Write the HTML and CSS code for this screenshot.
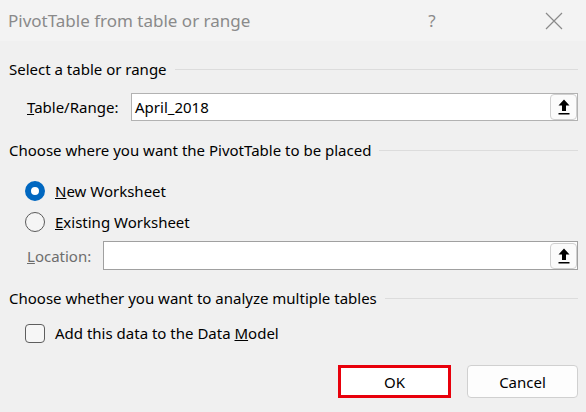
FILE: index.html
```html
<!DOCTYPE html>
<html lang="en">
<head>
<meta charset="utf-8">
<title>PivotTable from table or range</title>
<link rel="stylesheet" href="styles.css">
</head>
<body>
<div class="dialog">
  <div class="titlebar">
    <span class="title">PivotTable from table or range</span>
    <span class="help">?</span>
    <span class="close">
      <svg width="18" height="18" viewBox="0 0 18 18"><path d="M1 1 L17 17 M17 1 L1 17" stroke="#8a8a8a" stroke-width="1.2" fill="none"/></svg>
    </span>
  </div>
  <div class="content">
    <div class="group-head g1"><span>Select a table or range</span><span class="rule"></span></div>
    <div class="field-row r-table">
      <span class="label"><u>T</u>able/Range:</span>
      <div class="input">
        <span class="value">April_2018</span>
        <span class="pick">
          <svg width="12" height="16" viewBox="0 0 12 16"><path d="M6 0.5 L11.5 6.5 L8 6.5 L8 12 L4 12 L4 6.5 L0.5 6.5 Z" fill="#000"/><rect x="0.5" y="14" width="11" height="1.5" fill="#000"/></svg>
        </span>
      </div>
    </div>
    <div class="group-head g2"><span>Choose where you want the PivotTable to be placed</span><span class="rule"></span></div>
    <div class="option o1"><span class="radio checked"></span><span class="opt-label"><u>N</u>ew Worksheet</span></div>
    <div class="option o2"><span class="radio"></span><span class="opt-label"><u>E</u>xisting Worksheet</span></div>
    <div class="field-row r-loc">
      <span class="label muted"><u>L</u>ocation:</span>
      <div class="input loc">
        <span class="value"></span>
        <span class="pick">
          <svg width="12" height="16" viewBox="0 0 12 16"><path d="M6 0.5 L11.5 6.5 L8 6.5 L8 12 L4 12 L4 6.5 L0.5 6.5 Z" fill="#000"/><rect x="0.5" y="14" width="11" height="1.5" fill="#000"/></svg>
        </span>
      </div>
    </div>
    <div class="group-head g3"><span>Choose whether you want to analyze multiple tables</span><span class="rule"></span></div>
    <div class="option c1"><span class="check"></span><span class="opt-label">Add this data to the Data <u>M</u>odel</span></div>
    <div class="buttons">
      <button class="btn ok">OK</button>
      <button class="btn cancel">Cancel</button>
    </div>
  </div>
</div>
</body>
</html>
```
FILE: styles.css
```css
* { box-sizing: border-box; }
html, body { margin: 0; padding: 0; }
body {
  width: 586px;
  height: 412px;
  background: #f0f0f0;
  font-family: "Noto Sans", "Open Sans", sans-serif;
  font-size: 15px;
  color: #000;
  overflow: hidden;
}
.dialog { width: 586px; height: 412px; }
.titlebar {
  height: 41px;
  background: #f3f3f3;
  display: flex;
  align-items: center;
  padding-left: 8px;
}
.title {
  font-size: 17px;
  color: #8a8a8a;
  flex: 1;
  margin-top: -1px;
}
.help {
  font-size: 17px;
  color: #8a8a8a;
  width: 20px;
  text-align: center;
  margin-right: 103px;
}
.close {
  width: 18px;
  height: 18px;
  margin-right: 23px;
  display: flex;
}
.content { padding: 0 8px 0 9px; }
.group-head {
  height: 20px;
  display: flex;
  align-items: center;
  white-space: nowrap;
}
.rule {
  flex: 1;
  height: 1px;
  background: #dcdcdc;
  margin-left: 8px;
}
.g1 { margin-top: 18px; }
.g2 { margin-top: 19px; }
.g3 { margin-top: 18px; }
.field-row {
  display: flex;
  align-items: center;
  height: 28px;
}
.r-table { margin-top: 14px; }
.r-loc { margin-top: 8px; height: 29px; }
.label {
  padding-left: 18px;
  width: 122px;
  flex: none;
  white-space: nowrap;
}
.r-loc .label { width: 94px; }
.muted { color: #6d6d6d; }
.input {
  flex: 1;
  height: 100%;
  background: #fff;
  border: 1px solid #b2b2b2;
  display: flex;
  align-items: center;
  padding: 0 0 0 3px;
}
.input.loc { border-color: #a0a0a0; }
.value { flex: 1; font-size: 15px; }
.pick {
  width: 27px;
  height: 26px;
  border: 1px solid #d0d0d0;
  border-radius: 4px;
  background: #fbfbfb;
  display: flex;
  align-items: center;
  justify-content: center;
}
.option {
  display: flex;
  align-items: center;
  height: 22px;
  padding-left: 16px;
}
.o1 { margin-top: 20px; }
.o2 { margin-top: 9px; }
.radio {
  width: 20px;
  height: 20px;
  border-radius: 50%;
  border: 1px solid #5a5a5a;
  background: #f5f5f5;
  flex: none;
}
.radio.checked {
  border: 6px solid #0067c0;
  background: #fff;
}
.opt-label { margin-left: 10px; }
.c1 { margin-top: 15px; height: 20px; }
.check {
  width: 20px;
  height: 19px;
  border: 1px solid #5e5e5e;
  border-radius: 4px;
  background: #f6f6f6;
  flex: none;
}
.buttons {
  display: flex;
  justify-content: flex-end;
  gap: 16px;
  margin-top: 22px;
}
.btn {
  font-family: inherit;
  font-size: 15px;
  color: #000;
  background: #fdfdfd;
  height: 33px;
  margin: 0;
}
.ok {
  width: 113px;
  border: 3px solid #e8000b;
  border-radius: 0;
  background: #fff;
}
.cancel {
  width: 111px;
  border: 1px solid #d0d0d0;
  border-radius: 4px;
}
```
